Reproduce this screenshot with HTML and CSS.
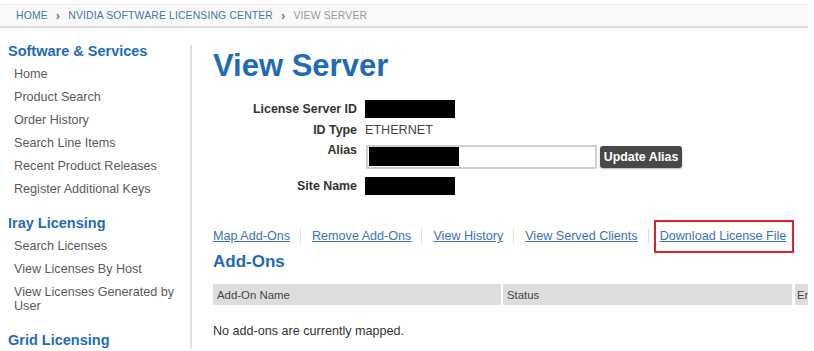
FILE: index.html
```html
<!DOCTYPE html>
<html lang="en">
<head>
    <meta charset="UTF-8">
    <meta name="viewport" content="width=device-width, initial-scale=1.0">
    <title>View Server</title>
    <link rel="stylesheet" href="styles.css">
</head>
<body>
    <div class="page">
        <div class="breadcrumb">
            <a class="crumb">Home</a>
            <span class="crumb-sep">&rsaquo;</span>
            <a class="crumb">NVIDIA Software Licensing Center</a>
            <span class="crumb-sep">&rsaquo;</span>
            <span class="crumb current">View Server</span>
        </div>
        <div class="layout">
            <div class="sidebar">
                <div class="side-title">Software &amp; Services</div>
                <div class="side-item">Home</div>
                <div class="side-item">Product Search</div>
                <div class="side-item">Order History</div>
                <div class="side-item">Search Line Items</div>
                <div class="side-item">Recent Product Releases</div>
                <div class="side-item">Register Additional Keys</div>

                <div class="side-title">Iray Licensing</div>
                <div class="side-item">Search Licenses</div>
                <div class="side-item">View Licenses By Host</div>
                <div class="side-item">View Licenses Generated by User</div>

                <div class="side-title">Grid Licensing</div>
            </div>
            <div class="content">
                <h1>View Server</h1>
                <div class="details">
                    <div class="field">
                        <div class="label">License Server ID</div>
                        <div class="redacted"></div>
                    </div>
                    <div class="field field-type">
                        <div class="label">ID Type</div>
                        <div class="value">ETHERNET</div>
                    </div>
                    <div class="field field-alias">
                        <div class="label">Alias</div>
                        <div class="alias-input"><div class="redacted small"></div></div>
                        <button class="btn-update">Update Alias</button>
                    </div>
                    <div class="field">
                        <div class="label">Site Name</div>
                        <div class="redacted"></div>
                    </div>
                </div>

                <div class="actions">
                    <a class="action">Map Add-Ons</a>
                    <a class="action">Remove Add-Ons</a>
                    <a class="action">View History</a>
                    <a class="action">View Served Clients</a>
                    <a class="action highlight">Download License File</a>
                </div>

                <h2>Add-Ons</h2>
                <div class="table-head">
                    <div class="col col-name">Add-On Name</div>
                    <div class="col col-status">Status</div>
                    <div class="col col-end">End Date</div>
                </div>
                <div class="empty">No add-ons are currently mapped.</div>
            </div>
        </div>
    </div>
</body>
</html>
```

FILE: styles.css
```css
:root {
    --heading-blue: #1f6cb4;
    --link-blue: #3a72b6;
    --text-color: #555;
    --label-color: #333;
    --line-color: #e2e2e2;
}
body {
    margin: 0;
    padding: 4px 0 0 0;
    font-family: 'Liberation Sans', Arial, sans-serif;
    background: #fff;
    color: var(--text-color);
}
.page {
    width: 808px;
    height: 347px;
    overflow: hidden;
}
.breadcrumb {
    height: 21px;
    border-top: 1px solid #efefef;
    border-bottom: 2px solid #dcdcdc;
    background-color: #f9f9f9;
    display: flex;
    align-items: center;
    padding-left: 16px;
    font-size: 10.4px;
    text-transform: uppercase;
    letter-spacing: 0.15px;
}
.crumb {
    color: #4676a8;
}
.crumb.current {
    color: #9a9a9a;
}
.crumb-sep {
    color: #6a7f95;
    font-weight: bold;
    font-size: 13px;
    margin: 0 8px;
    line-height: 10px;
}
.layout {
    display: flex;
}
.sidebar {
    width: 190px;
    flex-shrink: 0;
    padding-top: 14px;
    box-sizing: border-box;
}
.side-title {
    color: var(--heading-blue);
    font-weight: bold;
    font-size: 14.5px;
    line-height: 18px;
    padding-left: 8px;
}
.side-title + .side-item {
    margin-top: 3px;
}
.side-item + .side-title {
    margin-top: 13px;
}
.side-item {
    font-size: 12.6px;
    line-height: 14px;
    padding: 4px 12px 5px 14px;
    color: #5a5a5a;
}
.content {
    flex-grow: 1;
    margin-top: 17px;
    border-left: 2px solid var(--line-color);
    padding-left: 21px;
}
h1 {
    margin: 3px 0 0 0;
    font-size: 31px;
    line-height: 36px;
    color: var(--heading-blue);
    font-weight: bold;
}
.details {
    margin-top: 14px;
}
.field {
    display: flex;
    align-items: center;
    height: 22px;
}
.field-type {
    height: 20px;
}
.field-alias {
    height: 24px;
    margin: 5px 0 6px 0;
    align-items: flex-start;
}
.label {
    width: 144px;
    text-align: right;
    font-weight: bold;
    font-size: 12.4px;
    color: var(--label-color);
    margin-right: 8px;
}
.field-alias .label {
    line-height: 14px;
    margin-top: -2px;
}
.value {
    font-size: 12.6px;
    color: #444;
}
.redacted {
    width: 90px;
    height: 18px;
    background-color: #000;
}
.redacted.small {
    height: 19px;
}
.alias-input {
    width: 226px;
    height: 20px;
    border: 2px solid #cfcfcf;
    border-radius: 1px;
    padding: 0 0 0 1px;
    margin-left: 1px;
    background: #fff;
    display: flex;
    align-items: flex-start;
}
.btn-update {
    margin: 1px 0 0 3px;
    height: 22px;
    width: 82px;
    padding: 0;
    border: none;
    border-radius: 3px;
    background-color: #484848;
    color: #fff;
    font-family: 'Liberation Sans', Arial, sans-serif;
    font-weight: bold;
    font-size: 12.4px;
    box-shadow: 0 1px 2px rgba(0, 0, 0, 0.3);
}
.actions {
    margin-top: 32px;
    display: flex;
    font-size: 12.6px;
    line-height: 14px;
}
.action {
    color: var(--link-blue);
    text-decoration: underline;
    padding: 0 10px 0 11px;
    border-left: 1px solid #dedede;
    position: relative;
}
.action:first-child {
    padding-left: 0;
    border-left: none;
}
.highlight::after {
    content: "";
    position: absolute;
    top: -9px;
    bottom: -10px;
    left: 5px;
    right: 2px;
    border: 2px solid #d8242c;
}
h2 {
    margin: 9px 0 0 0;
    font-size: 17px;
    line-height: 20px;
    color: var(--heading-blue);
    font-weight: bold;
}
.table-head {
    margin-top: 12px;
    display: flex;
    gap: 2px;
    height: 21px;
    font-size: 11.4px;
    color: #444;
}
.col {
    background-color: #dddddd;
    display: flex;
    align-items: center;
    padding-left: 4px;
    box-sizing: border-box;
    white-space: nowrap;
}
.col-name {
    width: 288px;
}
.col-status {
    width: 289px;
}
.col-end {
    width: 120px;
    margin-left: 1px;
    padding-left: 2px;
}
.empty {
    margin-top: 19px;
    font-size: 12.6px;
    line-height: 14px;
    color: var(--label-color);
}
```
